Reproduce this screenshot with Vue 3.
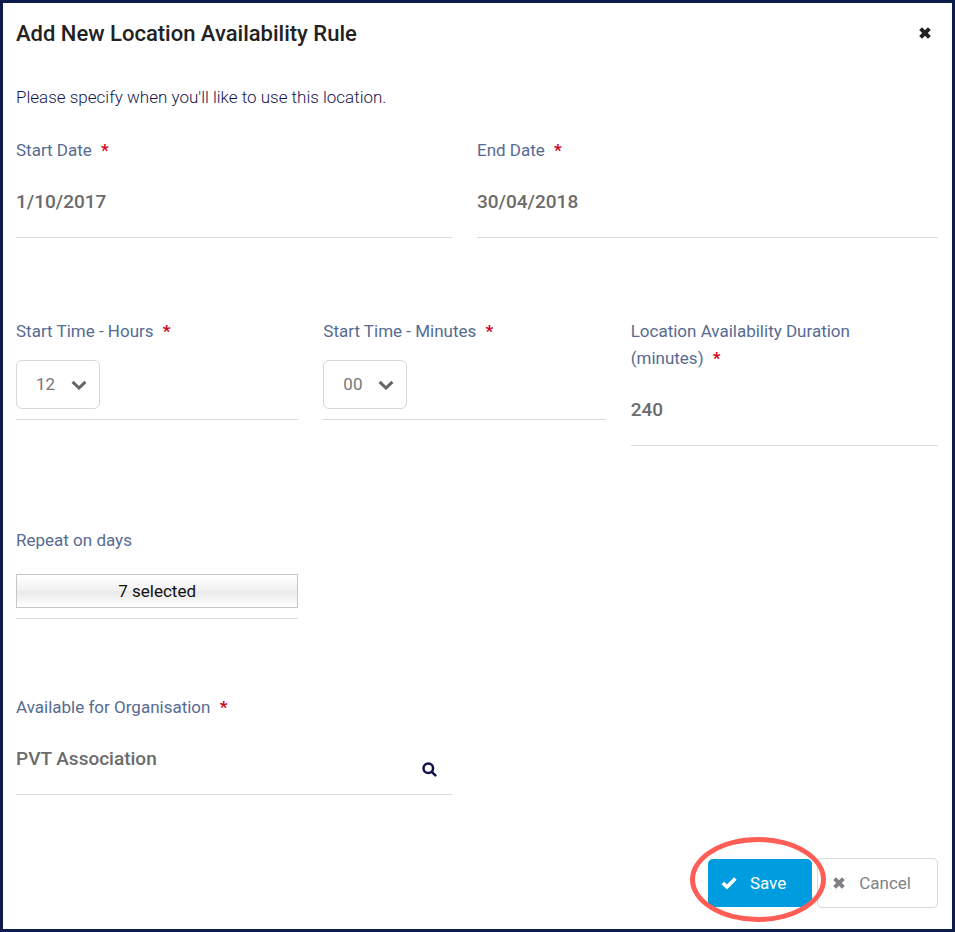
<template>
  <form class="dialog" @submit.prevent>
    <header class="dialog-header">
      <h1>Add New Location Availability Rule</h1>
      <button type="button" class="close" aria-label="Close">
        <svg viewBox="0 0 14 14" width="14" height="14"><path d="M2.6 2.6 11.4 11.4M11.4 2.6 2.6 11.4" /></svg>
      </button>
    </header>

    <p class="intro">Please specify when you'll like to use this location.</p>

    <div class="row halves">
      <div class="field">
        <label for="start-date">Start Date <span class="required">*</span></label>
        <input id="start-date" v-model="rule.startDate" type="text" />
      </div>
      <div class="field">
        <label for="end-date">End Date <span class="required">*</span></label>
        <input id="end-date" v-model="rule.endDate" type="text" />
      </div>
    </div>

    <div class="row thirds">
      <div v-for="time in times" :key="time.key" class="field">
        <label :for="time.key">{{ time.label }} <span class="required">*</span></label>
        <div class="select">
          <select :id="time.key" v-model="rule[time.key]">
            <option v-for="n in time.options" :key="n">{{ n }}</option>
          </select>
          <svg viewBox="0 0 16 10" width="16" height="10"><path d="M1.6 1.8 8 8 14.4 1.8" /></svg>
        </div>
      </div>
      <div class="field">
        <label for="duration">Location Availability Duration (minutes) <span class="required">*</span></label>
        <input id="duration" v-model="rule.duration" type="text" />
      </div>
    </div>

    <div class="row thirds repeat">
      <div class="field">
        <label for="days">Repeat on days</label>
        <button id="days" type="button" class="multiselect">{{ rule.days.length }} selected</button>
      </div>
    </div>

    <div class="row halves organisation">
      <div class="field">
        <label for="organisation">Available for Organisation <span class="required">*</span></label>
        <div class="lookup">
          <input id="organisation" v-model="rule.organisation" type="text" />
          <button type="button" class="search" aria-label="Search organisations">
            <svg viewBox="0 0 15 15" width="15" height="15">
              <circle cx="6.3" cy="6.3" r="4.8" />
              <path d="M9.8 9.8 13.4 13.4" />
            </svg>
          </button>
        </div>
      </div>
    </div>

    <footer class="actions">
      <div class="highlighted">
        <button type="submit" class="btn save">
          <svg viewBox="0 0 16 14" width="16" height="14"><path d="M1.8 7 6 11 14.4 2.6" /></svg>
          Save
        </button>
        <span class="ring"></span>
      </div>
      <button type="button" class="btn cancel">
        <svg viewBox="0 0 14 14" width="14" height="14"><path d="M2.6 2.6 11.4 11.4M11.4 2.6 2.6 11.4" /></svg>
        Cancel
      </button>
    </footer>
  </form>
</template>

<script setup>
import { reactive } from 'vue'

const range = (count, step = 1) =>
  Array.from({ length: count }, (_, i) => String(i * step).padStart(2, '0'))

const times = [
  { key: 'hours', label: 'Start Time - Hours', options: range(24) },
  { key: 'minutes', label: 'Start Time - Minutes', options: range(12, 5) },
]

const rule = reactive({
  startDate: '1/10/2017',
  endDate: '30/04/2018',
  hours: '12',
  minutes: '00',
  duration: '240',
  days: ['Mon', 'Tue', 'Wed', 'Thu', 'Fri', 'Sat', 'Sun'],
  organisation: 'PVT Association',
})
</script>

<style>
body { margin: 0; background: #fff; }
</style>

<style scoped>
.dialog, .dialog * { box-sizing: border-box; }
.dialog {
  display: flex;
  flex-direction: column;
  min-height: 100vh;
  padding: 17px 14px 21px 13px;
  border: 3px solid #0d1d4b;
  background: #fff;
  color: #16164f;
  font-family: Roboto, sans-serif;
  font-size: 17px;
  line-height: 27px;
}
button, input, select { font: inherit; }
button { cursor: pointer; }
svg { flex: none; fill: none; stroke: currentColor; }

.dialog-header { display: flex; align-items: flex-start; justify-content: space-between; }
h1 { margin: 0; color: #222; font-size: 22px; font-weight: 500; line-height: 28px; }
.close {
  display: flex;
  padding: 6px;
  border: 0;
  background: none;
  color: #222;
}
.close svg, .cancel svg { stroke-width: 4; }
.intro { margin: 36px 0 26px; font-weight: 300; }

.row { display: flex; margin-bottom: 80px; }
.field {
  display: flex;
  flex-direction: column;
  align-items: flex-start;
  padding-right: 25px;
}
.halves .field { width: 50%; }
.thirds .field { width: calc(100% / 3); }
.halves .field:nth-child(2), .thirds .field:nth-child(3) { padding-right: 0; }
.thirds { margin-bottom: 81px; }
.repeat { margin-bottom: 75px; }
.organisation { margin-bottom: 62px; }

label { padding-right: 25px; color: #566b91; }
.required { margin-left: 5px; color: #d0021b; font-weight: 700; }

input {
  width: 100%;
  height: 60px;
  margin-top: 14px;
  padding: 0 0 12px;
  border: 0;
  border-bottom: 1px solid #dadae3;
  outline: 0;
  background: none;
  color: #6b6b6b;
  font-size: 19px;
  font-weight: 500;
}

.select {
  display: grid;
  align-items: center;
  width: 100%;
  margin-top: 15px;
  padding-bottom: 10px;
  border-bottom: 1px solid #dadae3;
}
.select select {
  grid-area: 1 / 1;
  width: 84px;
  height: 49px;
  padding: 0 0 0 19px;
  border: 1px solid #d8d8d8;
  border-radius: 6px;
  appearance: none;
  background: #fff;
  color: #777;
}
.select svg {
  grid-area: 1 / 1;
  margin-left: 55px;
  color: #666;
  stroke-width: 3;
  pointer-events: none;
}

.multiselect {
  width: 100%;
  height: 34px;
  margin-top: 20px;
  padding: 0;
  border: 1px solid #c6c6c6;
  background: linear-gradient(#fff, #f1f1f1 48%, #e9e9e9 52%, #fff);
  color: #111;
}
.repeat .field::after {
  content: '';
  width: 100%;
  margin-top: 10px;
  border-bottom: 1px solid #d5dce4;
}

.lookup { display: grid; align-items: center; width: 100%; }
.lookup input { grid-area: 1 / 1; border-color: #d7dbe4; }
.search {
  display: flex;
  grid-area: 1 / 1;
  justify-self: end;
  margin: 22px 9px 0 0;
  padding: 6px;
  border: 0;
  background: none;
  color: #11114e;
}
.search svg { stroke-width: 2.5; stroke-linecap: round; }

.actions { display: flex; align-items: center; justify-content: flex-end; gap: 5px; margin-top: auto; }
.btn {
  display: flex;
  align-items: center;
  gap: 13px;
  border-radius: 5px;
}
.save {
  height: 48px;
  padding: 0 26px 0 13px;
  border: 0;
  background: #009ce0;
  color: #fff;
}
.save svg { stroke-width: 3.6; }
.cancel {
  height: 50px;
  padding: 0 26px 0 14px;
  border: 1px solid #d8d8d8;
  background: #fff;
  color: #808085;
}
.highlighted { position: relative; }
.ring {
  position: absolute;
  inset: -22px -14px -15px -18px;
  border: 5px solid #ff5d55;
  border-radius: 50%;
  pointer-events: none;
}
</style>
